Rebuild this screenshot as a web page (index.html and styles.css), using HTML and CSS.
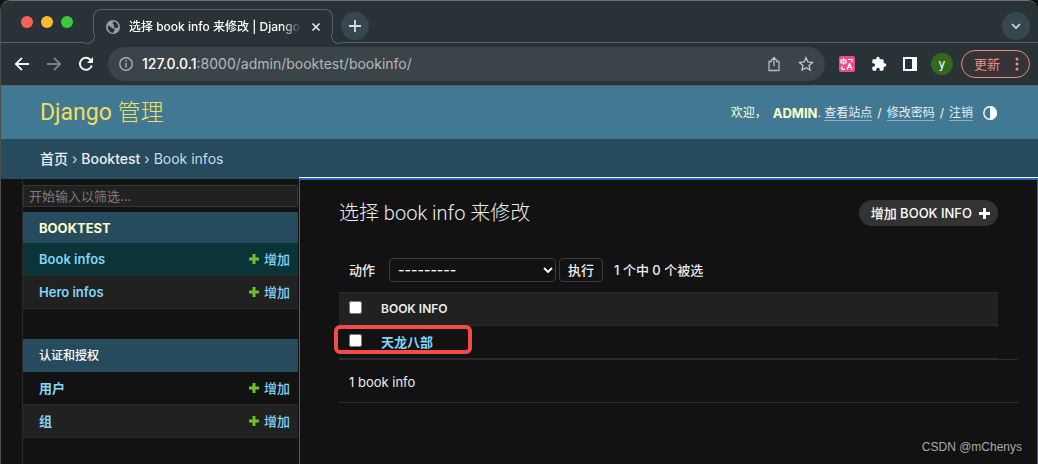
FILE: index.html
```
<!DOCTYPE html>
<html lang="zh-CN">
<head>
<meta charset="utf-8">
<title>选择 book info 来修改 | Django 站点管理员</title>
<link rel="stylesheet" href="styles.css">
</head>
<body>
<div class="window">
  <div class="tabstrip">
    <div class="lights"><span class="light red"></span><span class="light yellow"></span><span class="light green"></span></div>
    <div class="tab">
      <svg class="favicon" viewBox="0 0 14 14" width="14" height="14"><circle cx="7" cy="7" r="7" fill="#9aa0a6"/><path d="M2 5.500l3 1.500 1.500 1.500h2v2l-1.500 2.400C4 12.500 1.800 10 1.700 7zM7.500 1.500l-1 2L8 5l-.5 1.500L9 8l3.300-.5C12.500 5 11 2.500 9 1.700z" fill="#283237"/></svg>
      <span class="tab-title">选择 book info 来修改 | Django 站</span>
      <button class="plain" aria-label="关闭标签页"><svg width="10" height="10" viewBox="0 0 10 10"><path d="M1.500 1.500l7 7M8.500 1.500l-7 7" stroke="#e8eaed" stroke-width="1.600"/></svg></button>
    </div>
    <div class="strip-rest">
      <button class="round" aria-label="新标签页"><svg width="14" height="14" viewBox="0 0 14 14"><path d="M7 1v12M1 7h12" stroke="#dadce0" stroke-width="1.800"/></svg></button>
      <button class="round" aria-label="搜索标签页"><svg width="12" height="12" viewBox="0 0 12 12"><path d="M2 4l4 4 4-4" fill="none" stroke="#dadce0" stroke-width="1.700"/></svg></button>
    </div>
  </div>
  <div class="toolbar">
    <button class="plain" aria-label="后退"><svg width="16" height="16" viewBox="0 0 16 16"><path d="M15 8H2M8 1.800L1.800 8 8 14.200" fill="none" stroke="#f1f3f4" stroke-width="1.900"/></svg></button>
    <button class="plain" aria-label="前进"><svg width="16" height="16" viewBox="0 0 16 16"><path d="M1 8h13M8 1.800L14.200 8 8 14.200" fill="none" stroke="#7d8387" stroke-width="1.900"/></svg></button>
    <button class="plain" aria-label="刷新"><svg width="16" height="16" viewBox="0 0 16 16"><path d="M13.700 9.500A6 6 0 1 1 12.300 3.700L14 5.500" fill="none" stroke="#f1f3f4" stroke-width="2"/><path d="M15 1v6H9z" fill="#f1f3f4"/></svg></button>
    <div class="omnibox">
      <svg width="14" height="14" viewBox="0 0 14 14"><circle cx="7" cy="7" r="6.200" fill="none" stroke="#a9aeb1" stroke-width="1.400"/><path d="M7 6v4.500M7 3.300v1.500" stroke="#a9aeb1" stroke-width="1.500"/></svg>
      <span class="url"><b>127.0.0.1</b>:8000/admin/booktest/bookinfo/</span>
      <button class="plain" aria-label="分享"><svg width="14" height="16" viewBox="0 0 14 16"><path d="M5 5.500H2v9h10v-9H9M7 10V1.500M4 4.500l3-3 3 3" fill="none" stroke="#b5babd" stroke-width="1.300"/></svg></button>
      <button class="plain" aria-label="收藏"><svg width="16" height="16" viewBox="0 0 16 16"><path d="M8 1.700l1.900 4.200 4.600.5-3.400 3.100.9 4.500L8 11.700 4 14l.9-4.500L1.500 6.400l4.600-.5z" fill="none" stroke="#c2c6c9" stroke-width="1.300"/></svg></button>
    </div>
    <button class="plain" aria-label="翻译"><svg width="16" height="16" viewBox="0 0 16 16"><rect width="16" height="16" rx="2" fill="#ec4a8b"/><path d="M2 4h5v3H2zM4.500 2.200V9M9 3.500h4v2.800M3 10.500v2.800h3M8 13.500l2.500-6 2.500 6M9 11.500h3" fill="none" stroke="#fff" stroke-width="1.200"/></svg></button>
    <button class="plain" aria-label="扩展程序"><svg width="16" height="16" viewBox="0 0 24 24"><path d="M20.500 11H19V7a2 2 0 0 0-2-2h-4V3.500a2.500 2.500 0 0 0-5 0V5H4a2 2 0 0 0-2 2v3.800h1.500a2.700 2.700 0 0 1 0 5.400H2V20a2 2 0 0 0 2 2h3.800v-1.500a2.700 2.700 0 0 1 5.400 0V22H17a2 2 0 0 0 2-2v-4h1.500a2.500 2.500 0 0 0 0-5z" fill="#fff"/></svg></button>
    <button class="plain" aria-label="侧边栏"><svg width="14" height="14" viewBox="0 0 14 14"><path d="M0 0h14v14H0zM2 2v10h7V2z" fill="#fff" fill-rule="evenodd"/></svg></button>
    <button class="avatar">y</button>
    <button class="update">更新<svg width="4" height="14" viewBox="0 0 4 14"><g fill="#f28b82"><circle cx="2" cy="2" r="1.500"/><circle cx="2" cy="7" r="1.500"/><circle cx="2" cy="12" r="1.500"/></g></svg></button>
  </div>

  <header class="site-header">
    <a class="brand" href="#">Django 管理</a>
    <div class="user-tools">
      <span class="welcome">欢迎，</span><strong>ADMIN</strong>.&nbsp;<a href="#">查看站点</a><i>/</i><a href="#">修改密码</a><i>/</i><a href="#">注销</a>
      <button class="plain theme" aria-label="切换主题"><svg width="14" height="14" viewBox="0 0 14 14"><circle cx="7" cy="7" r="6.200" fill="none" stroke="#fff" stroke-width="1.400"/><path d="M7 0a7 7 0 0 1 0 14z" fill="#fff"/></svg></button>
    </div>
  </header>
  <nav class="breadcrumbs"><a href="#">首页</a> › <a href="#">Booktest</a> › <span>Book infos</span></nav>

  <div class="content">
    <nav class="sidebar">
      <input class="filter" type="search" placeholder="开始输入以筛选..." aria-label="筛选导航条目">
      <table class="module">
        <caption><a href="#">BOOKTEST</a></caption>
        <tr class="current"><th><a href="#">Book infos</a></th><td><a href="#"><svg class="plus" viewBox="0 0 10 10"><path d="M5 0v10M0 5h10" stroke="#70bf2b" stroke-width="3"/></svg>增加</a></td></tr>
        <tr class="shade"><th><a href="#">Hero infos</a></th><td><a href="#"><svg class="plus" viewBox="0 0 10 10"><path d="M5 0v10M0 5h10" stroke="#70bf2b" stroke-width="3"/></svg>增加</a></td></tr>
      </table>
      <table class="module auth">
        <caption><a href="#">认证和授权</a></caption>
        <tr><th><a href="#">用户</a></th><td><a href="#"><svg class="plus" viewBox="0 0 10 10"><path d="M5 0v10M0 5h10" stroke="#70bf2b" stroke-width="3"/></svg>增加</a></td></tr>
        <tr class="shade"><th><a href="#">组</a></th><td><a href="#"><svg class="plus" viewBox="0 0 10 10"><path d="M5 0v10M0 5h10" stroke="#70bf2b" stroke-width="3"/></svg>增加</a></td></tr>
      </table>
    </nav>
    <main class="main">
      <div class="title-row">
        <h1>选择 book info 来修改</h1>
        <a class="add" href="#">增加 BOOK INFO<svg width="11" height="11" viewBox="0 0 10 10"><path d="M5 0v10M0 5h10" stroke="#fff" stroke-width="2.600"/></svg></a>
      </div>
      <form class="actions">
        <label for="action">动作</label>
        <span class="select-wrap"><select id="action"><option>---------</option></select><svg width="10" height="8" viewBox="0 0 10 8"><path d="M1 2l4 4 4-4" fill="none" stroke="#fff" stroke-width="1.900"/></svg></span>
        <button type="button" class="run">执行</button>
        <span class="counter">1 个中 0 个被选</span>
      </form>
      <table class="results">
        <thead><tr><th class="check"><input type="checkbox" aria-label="全选"></th><th>BOOK INFO</th></tr></thead>
        <tbody><tr><td class="check"><input type="checkbox" aria-label="选择 天龙八部"><span class="highlight"></span></td><td class="name"><a href="#">天龙八部</a></td></tr></tbody>
      </table>
      <p class="paginator">1 book info</p>
      <div class="credit">CSDN @mChenys</div>
    </main>
  </div>
</div>
</body>
</html>
```
FILE: styles.css
```
* { box-sizing: border-box; }
body { margin: 0; background: #121212; color: #eee; font: 13px/20px Inter, "Noto Sans CJK SC", sans-serif; }
a { color: #81d4fa; text-decoration: none; }
button { font: inherit; color: inherit; cursor: pointer; }
svg { display: block; flex: none; }
.window { display: flex; flex-direction: column; min-height: 100vh; border-top: 1px solid #6c7072; border-left: 1px solid #4b5052; border-radius: 10px 10px 0 0; overflow: hidden; }
.plain { display: flex; padding: 0; border: 0; background: none; }

.tabstrip { display: flex; height: 42px; background: #283237; }
.lights { display: flex; gap: 8px; width: 84px; padding: 15px 0 0 20px; border-bottom: 1px solid #596165; }
.light { width: 12px; height: 12px; border-radius: 50%; }
.red { background: #fc605b; }
.yellow { background: #fdbc2e; }
.green { background: #3ac840; }
.tab { position: relative; display: flex; align-items: center; gap: 9px; width: 240px; height: 25px; margin: 8px 8px 0; padding: 9px 11px 0 12px; border: solid #596165; border-width: 1px 1px 0; border-radius: 8px 8px 0 0; }
.tab::before, .tab::after { content: ""; position: absolute; top: 100%; width: 9px; height: 9px; border: solid #596165; }
.tab::before { right: 100%; margin-right: -1px; border-width: 0 1px 1px 0; border-bottom-right-radius: 8px; }
.tab::after { left: 100%; margin-left: -1px; border-width: 0 0 1px 1px; border-bottom-left-radius: 8px; }
.tab-title { flex: 1; overflow: hidden; white-space: nowrap; color: #fff; font-size: 12px; font-weight: 500; -webkit-mask-image: linear-gradient(90deg, #000 88%, transparent); mask-image: linear-gradient(90deg, #000 88%, transparent); }
.strip-rest { display: flex; flex: 1; justify-content: space-between; padding: 11px 8px 0 0; border-bottom: 1px solid #596165; }
.round { display: grid; place-items: center; width: 28px; height: 28px; padding: 0; border: 0; border-radius: 50%; background: #37474f; }

.toolbar { display: flex; align-items: center; gap: 16px; height: 43px; padding: 0 8px 0 13px; background: #283237; border-bottom: 1px solid #5a6266; }
.omnibox { display: flex; flex: 1; align-items: center; gap: 17px; height: 34px; margin: 0 -2px; padding: 0 11px; border-radius: 17px; background: #3b4449; }
.url { flex: 1; margin-left: -8px; color: #b4b9bc; font-size: 14px; white-space: nowrap; }
.url b { color: #fff; font-weight: 500; }
.avatar { width: 22px; height: 22px; margin: 0 -8px 0 -2px; padding: 0; border: 0; border-radius: 50%; background: #33691e; color: #fff; font-size: 12px; line-height: 20px; }
.update { display: flex; align-items: center; gap: 15px; height: 28px; padding: 0 10px 0 12px; border: 1px solid #f28b82; border-radius: 14px; background: #353337; color: #f28b82; }

.site-header { display: flex; flex-wrap: wrap; align-items: center; justify-content: space-between; padding: 8px 41px 8px 39px; background: #417893; color: #ffc; }
.brand { color: #f5dd5d; font-size: 23px; line-height: 37px; font-weight: 400; }
.brand, h1 { font-family: Roboto, "Noto Sans CJK SC Light", "Noto Sans CJK SC", sans-serif; }
.user-tools { display: flex; align-items: center; font-size: 12px; }
.user-tools strong { margin-left: 6px; font-size: 13px; font-weight: 700; }
.user-tools a { color: #e8eff2; border-bottom: 1px solid #8fb0c0; line-height: 15px; }
.user-tools i { margin: 0 5px; font-style: normal; }
.theme { margin-left: 10px; }
.breadcrumbs { padding: 10px 40px 10px 39px; background: #264b5d; color: #c4dce8; font-size: 14px; }
.breadcrumbs a { color: #eee; font-weight: 500; }

.content { display: flex; flex: 1; }
.sidebar { width: 277px; margin-left: 21px; padding: 6px 1px 0 0; border-left: 1px solid #2a2a2a; }
.filter { display: block; width: 100%; height: 22px; margin-bottom: 5px; padding: 0 5px; border: 1px solid #353535; background: #212121; color: #eee; font: inherit; }
.filter::placeholder { color: #7d7d7d; }
.module { width: 100%; border-spacing: 0; }
.auth { margin-top: 30px; }
.module caption { padding: 6px 16px 5px; background: #264b5d; text-align: left; font-weight: 700; }
.module caption a { color: #ffc; }
.auth caption { padding: 7px 16px 6px; font-size: 12px; font-weight: 500; }
.auth caption a { color: #fff; }
.module th, .module td { height: 33px; padding: 0; border-bottom: 1px solid #2c2c2c; }
.module th { padding-left: 16px; text-align: left; font-weight: 600; }
.module td { padding-right: 8px; font-weight: 500; }
.module td a { display: flex; align-items: center; justify-content: flex-end; gap: 5px; }
.plus { width: 10px; height: 10px; }
.shade { background: #212121; }
.current { background: #0a3437; }

.main { position: relative; display: flex; flex: 1; flex-direction: column; margin-top: -1px; padding: 20px 19px 7px 39px; border: solid #2463c5; border-width: 2px 1px 0; box-shadow: 0 -1px 0 #fff; }
.title-row { display: flex; align-items: center; justify-content: space-between; padding-right: 20px; }
h1 { margin: 0; font-size: 20px; line-height: 26px; font-weight: 300; }
.add { display: flex; align-items: center; gap: 7px; padding: 3px 8px 3px 12px; border-radius: 13px; background: #333; color: #fff; font-weight: 500; }
.actions { display: flex; align-items: center; margin: 32px 0 10px 10px; font-weight: 500; }
.select-wrap { position: relative; width: 167px; margin: 0 3px 0 14px; }
.select-wrap svg { position: absolute; right: 3px; top: 8px; pointer-events: none; }
.select-wrap select { display: block; width: 100%; height: 24px; padding: 0 8px; appearance: none; border: 1px solid #3a3a3a; border-radius: 4px; background: #121212; color: #fff; font: inherit; font-size: 14px; }
.run { height: 24px; padding: 0 8px; border: 1px solid #3a3a3a; border-radius: 4px; background: #121212; line-height: 20px; }
.counter { margin-left: 11px; }
.results { width: calc(100% - 20px); border-spacing: 0; text-align: left; }
.results th, .results td { height: 33px; padding: 0; border-bottom: 1px solid #2c2c2c; }
.results thead { background: #212121; font-size: 12px; }
.results th { height: 34px; border-top: 1px solid #2c2c2c; font-weight: 600; }
.results .check { position: relative; width: 42px; padding: 0 0 4px 10px; }
.results input { display: block; width: 13px; height: 13px; margin: 0; }
.results .name { font-weight: 700; }
.highlight { position: absolute; left: -5px; top: -1px; width: 138px; height: 29px; border: 4px solid #f44b48; border-radius: 6px; pointer-events: none; }
.paginator { margin: 0; padding: 12px 10px 10px; border: solid #2c2c2c; border-width: 1px 0; }
.credit { margin: auto -4px 0 0; color: #a8a8a8; text-align: right; font-family: "Liberation Sans", sans-serif; font-size: 12px; }
```
